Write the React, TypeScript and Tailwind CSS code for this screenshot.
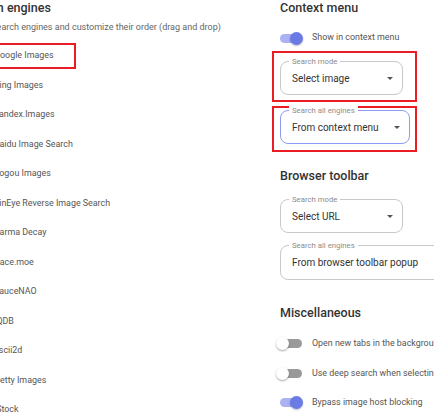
import React from 'react';

const engines = [
  'Google Images',
  'Bing Images',
  'Yandex.Images',
  'Baidu Image Search',
  'Sogou Images',
  'TinEye Reverse Image Search',
  'Karma Decay',
  'trace.moe',
  'SauceNAO',
  'IQDB',
  'ascii2d',
  'Getty Images',
  'iStock',
];

// small on/off switch, knob overhangs the track like the material one
const Toggle = ({ on }: { on: boolean }) => (
  <div className="relative w-[22px] h-[13px] shrink-0">
    <div
      className={
        'absolute inset-x-0 top-[2px] h-[9px] rounded-full ' +
        (on ? 'bg-[#aab2f2]' : 'bg-[#9a9a9a]')
      }
    />
    <div
      className={
        'absolute top-0 w-[13px] h-[13px] rounded-full ' +
        (on
          ? 'left-[10px] bg-[#6b7be6] shadow-[0_1px_2px_rgba(0,0,0,0.25)]'
          : 'left-[-4px] bg-white shadow-[0_1px_2px_rgba(0,0,0,0.35)]')
      }
    />
  </div>
);

const ToggleRow = ({ on, label, className = '' }: { on: boolean; label: string; className?: string }) => (
  <div className={'flex items-center pl-[8px] whitespace-nowrap ' + className}>
    <Toggle on={on} />
    <span className="ml-[10px] text-[8.9px] text-[#555]">{label}</span>
  </div>
);

const Arrow = () => (
  <svg width="6" height="3" viewBox="0 0 6 3" className="shrink-0 mr-[9px]">
    <path d="M0 0 L6 0 L3 3 Z" fill="#555" />
  </svg>
);

type SelectProps = {
  label: string;
  value: string;
  width: string;
  focused?: boolean;
  arrow?: boolean;
  className?: string;
};

const Select = ({ label, value, width, focused, arrow = true, className = '' }: SelectProps) => (
  <div
    className={
      'relative flex items-center h-[34px] rounded-[8px] pl-[11px] shrink-0 ' +
      (focused ? 'border-[1.5px] border-[#8e9af3] ' : 'border border-[#c9c9c9] ') +
      width +
      ' ' +
      className
    }
  >
    <span className="absolute top-[-5px] left-[8px] px-[3px] bg-white text-[7.75px] leading-[9px] text-[#8c8c8c] whitespace-nowrap">
      {label}
    </span>
    <span className="flex-1 text-[10px] text-[#333] whitespace-nowrap">{value}</span>
    {arrow && <Arrow />}
  </div>
);

const Heading = ({ children, className = '' }: { children: React.ReactNode; className?: string }) => (
  <h2 className={'h-[15px] leading-[15px] text-[12.5px] font-medium text-[#333] whitespace-nowrap ' + className}>
    {children}
  </h2>
);

export default function App() {
  return (
    <div className="w-[434px] h-[420px] overflow-hidden bg-white flex font-['Roboto',sans-serif]">
      {/* search engines list, its left edge is cut off by the crop */}
      <div className="w-[307px] shrink-0 -ml-[35px] flex flex-col">
        <Heading>Search engines</Heading>
        <p className="mt-[6px] h-[12px] leading-[12px] text-[9px] text-[#666] whitespace-nowrap">
          Select search engines and customize their order (drag and drop)
        </p>
        <ul className="mt-[8.25px] flex flex-col">
          {engines.map((name, i) => (
            <li key={name} className="h-[29.5px] flex items-center pl-[29px] text-[8.9px] text-[#555] whitespace-nowrap">
              {i === 0 ? (
                <span className="h-[26px] flex items-center border-2 border-[#ec1c24] -ml-[16px] pl-[14px] pr-[20px]">
                  {name}
                </span>
              ) : (
                name
              )}
            </li>
          ))}
        </ul>
      </div>

      {/* settings */}
      <div className="w-[220px] shrink-0 flex flex-col">
        <Heading className="pl-[8px]">Context menu</Heading>
        <ToggleRow on label="Show in context menu" className="mt-[13px] h-[20px]" />

        <div className="mt-[3px] w-[145px] h-[51px] border-2 border-[#ec1c24] pl-[6px] pt-[8px]">
          <Select label="Search mode" value="Select image" width="w-[123px]" />
        </div>
        <div className="mt-[4px] w-[145px] h-[46px] border-2 border-[#ec1c24] pl-[6px] pt-[2px]">
          <Select label="Search all engines" value="From context menu" width="w-[130px]" focused />
        </div>

        <Heading className="pl-[8px] mt-[15.5px]">Browser toolbar</Heading>
        <Select label="Search mode" value="Select URL" width="w-[123px]" className="ml-[8px] mt-[16.5px]" />
        <Select
          label="Search all engines"
          value="From browser toolbar popup"
          width="w-[200px]"
          arrow={false}
          className="ml-[8px] mt-[12px] h-[35px]"
        />

        <Heading className="pl-[8px] mt-[25px]">Miscellaneous</Heading>
        <div className="mt-[9px] flex flex-col">
          <ToggleRow on={false} label="Open new tabs in the background" className="h-[29.5px]" />
          <ToggleRow on={false} label="Use deep search when selecting images" className="h-[29.5px]" />
          <ToggleRow on label="Bypass image host blocking" className="h-[29.5px]" />
        </div>
      </div>
    </div>
  );
}
